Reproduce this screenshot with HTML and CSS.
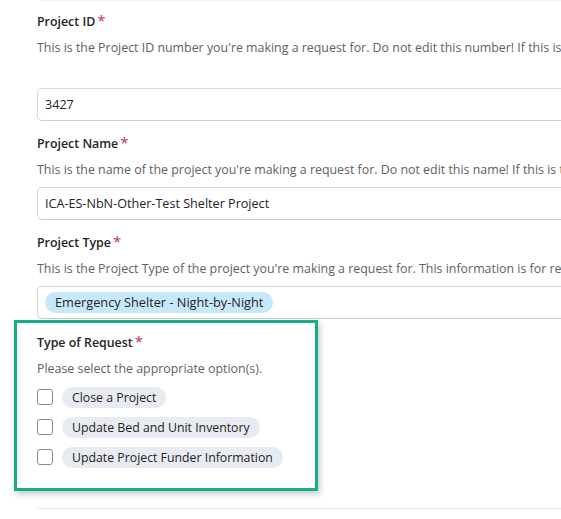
FILE: index.html
```html
<!DOCTYPE html>
<html>
<head>
<meta charset="utf-8">
<link rel="stylesheet" href="styles.css">
</head>
<body>
<div class="page">
  <div class="topline"></div>
  <form class="form">
    <div class="field first">
      <div class="label">Project ID<span class="req">*</span></div>
      <div class="desc">This is the Project ID number you're making a request for. Do not edit this number! If this is not the correct project, please contact support.</div>
      <div class="input">3427</div>
    </div>
    <div class="field">
      <div class="label">Project Name<span class="req">*</span></div>
      <div class="desc">This is the name of the project you're making a request for. Do not edit this name! If this is the wrong project, please contact support.</div>
      <div class="input">ICA-ES-NbN-Other-Test Shelter Project</div>
    </div>
    <div class="field">
      <div class="label">Project Type<span class="req">*</span></div>
      <div class="desc">This is the Project Type of the project you're making a request for. This information is for reference only.</div>
      <div class="input tags"><span class="tag">Emergency Shelter - Night-by-Night</span></div>
    </div>
    <div class="field highlight">
      <div class="label">Type of Request<span class="req">*</span></div>
      <div class="desc">Please select the appropriate option(s).</div>
      <div class="options">
        <label class="option"><span class="check"></span><span class="chip">Close a Project</span></label>
        <label class="option"><span class="check"></span><span class="chip">Update Bed and Unit Inventory</span></label>
        <label class="option"><span class="check"></span><span class="chip">Update Project Funder Information</span></label>
      </div>
    </div>
    <div class="divider"></div>
  </form>
</div>
</body>
</html>
```
FILE: styles.css
```css
html, body {
  margin: 0;
  padding: 0;
  background: #ffffff;
  overflow: hidden;
}
body {
  width: 561px;
  height: 519px;
  font-family: "Open Sans", "Noto Sans", sans-serif;
  font-size: 12.4px;
  color: #242424;
}
.page {
  position: relative;
  width: 561px;
  height: 519px;
  overflow: hidden;
}
.topline {
  margin-left: 40px;
  height: 1px;
  width: 700px;
  background: #f2f2f2;
}
.form {
  padding-left: 14px;
  padding-top: 9px;
}
.field {
  padding-left: 23px;
  width: 800px;
  margin-bottom: 11px;
}
.label {
  height: 20px;
  line-height: 20px;
  font-weight: 600;
  font-size: 12.4px;
  white-space: nowrap;
}
.req {
  color: #c4314b;
  font-weight: 400;
  margin-left: 2px;
  font-size: 15px;
}
.desc {
  margin-top: 9px;
  line-height: 18px;
  height: 18px;
  color: #616161;
  white-space: nowrap;
  overflow: hidden;
}
.field .input {
  margin-top: 8px;
}
.field.first .input {
  margin-top: 31px;
}
.input {
  box-sizing: border-box;
  height: 33px;
  border: 1px solid #d6d6d6;
  border-bottom-color: #cccccc;
  border-radius: 5px;
  padding: 0 7px;
  line-height: 31px;
  white-space: nowrap;
  font-size: 12.6px;
}
.input.tags {
  display: flex;
  align-items: center;
}
.tag {
  background: #c7e8fb;
  border-radius: 11px;
  height: 21px;
  line-height: 21px;
  padding: 0 10px;
  font-size: 12.75px;
}
.field.highlight {
  box-sizing: border-box;
  width: 304px;
  padding: 8px 0 16px 20px;
  border: 3px solid #16ae89;
  box-shadow: 2px 3px 6px rgba(0, 0, 0, 0.22);
  margin-top: -10px;
  margin-bottom: 17px;
  position: relative;
}
.options {
  margin-top: 4px;
  display: flex;
  flex-direction: column;
}
.option {
  height: 30px;
  display: flex;
  align-items: center;
  gap: 9px;
}
.check {
  box-sizing: border-box;
  width: 16px;
  height: 16px;
  border: 1.5px solid #8a8a8a;
  border-radius: 3px;
  background: #fff;
}
.chip {
  background: #e8ebf1;
  border-radius: 11px;
  height: 21px;
  line-height: 21px;
  padding: 0 10px;
  white-space: nowrap;
  font-size: 12.3px;
}
.divider {
  margin-left: 23px;
  width: 700px;
  height: 1px;
  background: #ececec;
}
```
